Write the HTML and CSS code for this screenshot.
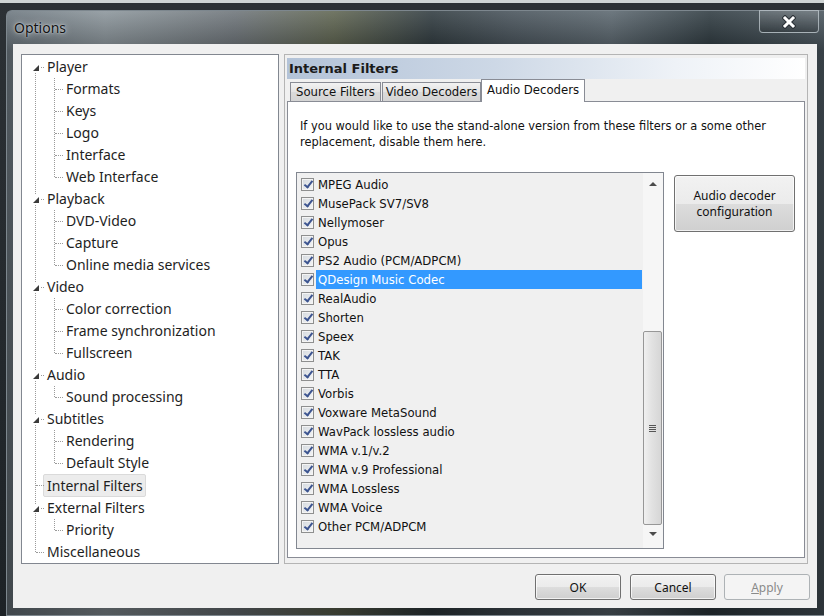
FILE: index.html
```html
<!DOCTYPE html>
<html lang="en">
<head>
  <meta charset="UTF-8">
  <title>Options</title>
  <link rel="stylesheet" href="styles.css">
</head>
<body>
  <div class="window">
    <div class="titlebar">
      <span class="title">Options</span>
      <span class="close">
        <svg width="14" height="14" viewBox="0 0 14 14">
          <path d="M3 3 L11 11 M11 3 L3 11" stroke="#2a3036" stroke-width="5" stroke-linecap="square"/>
          <path d="M3 3 L11 11 M11 3 L3 11" stroke="#fff" stroke-width="3" stroke-linecap="square"/>
        </svg>
      </span>
    </div>

    <div class="client">
      <div class="main">
        <div class="tree-box">
          <ul class="tree">
            <li class="node"><span class="exp"></span><span class="label">Player</span>
              <ul class="sub">
                <li>Formats</li>
                <li>Keys</li>
                <li>Logo</li>
                <li>Interface</li>
                <li>Web Interface</li>
              </ul>
            </li>
            <li class="node"><span class="exp"></span><span class="label">Playback</span>
              <ul class="sub">
                <li>DVD-Video</li>
                <li>Capture</li>
                <li>Online media services</li>
              </ul>
            </li>
            <li class="node"><span class="exp"></span><span class="label">Video</span>
              <ul class="sub">
                <li>Color correction</li>
                <li>Frame synchronization</li>
                <li>Fullscreen</li>
              </ul>
            </li>
            <li class="node"><span class="exp"></span><span class="label">Audio</span>
              <ul class="sub">
                <li>Sound processing</li>
              </ul>
            </li>
            <li class="node"><span class="exp"></span><span class="label">Subtitles</span>
              <ul class="sub">
                <li>Rendering</li>
                <li>Default Style</li>
              </ul>
            </li>
            <li class="node"><span class="label selected">Internal Filters</span></li>
            <li class="node"><span class="exp"></span><span class="label">External Filters</span>
              <ul class="sub">
                <li>Priority</li>
              </ul>
            </li>
            <li class="node"><span class="label">Miscellaneous</span></li>
          </ul>
        </div>

        <div class="panel">
          <div class="panel-head">Internal Filters</div>
          <div class="tabs">
            <span class="tab tab-source">Source Filters</span>
            <span class="tab tab-video">Video Decoders</span>
            <span class="tab tab-audio active">Audio Decoders</span>
          </div>
          <div class="page">
            <p class="desc">If you would like to use the stand-alone version from these filters or a some other<br>replacement, disable them here.</p>
            <div class="page-row">
              <div class="listbox">
                <ul class="items">
                  <li><span class="cb"></span><span class="txt">MPEG Audio</span></li>
                  <li><span class="cb"></span><span class="txt">MusePack SV7/SV8</span></li>
                  <li><span class="cb"></span><span class="txt">Nellymoser</span></li>
                  <li><span class="cb"></span><span class="txt">Opus</span></li>
                  <li><span class="cb"></span><span class="txt">PS2 Audio (PCM/ADPCM)</span></li>
                  <li class="sel"><span class="cb"></span><span class="txt">QDesign Music Codec</span></li>
                  <li><span class="cb"></span><span class="txt">RealAudio</span></li>
                  <li><span class="cb"></span><span class="txt">Shorten</span></li>
                  <li><span class="cb"></span><span class="txt">Speex</span></li>
                  <li><span class="cb"></span><span class="txt">TAK</span></li>
                  <li><span class="cb"></span><span class="txt">TTA</span></li>
                  <li><span class="cb"></span><span class="txt">Vorbis</span></li>
                  <li><span class="cb"></span><span class="txt">Voxware MetaSound</span></li>
                  <li><span class="cb"></span><span class="txt">WavPack lossless audio</span></li>
                  <li><span class="cb"></span><span class="txt">WMA v.1/v.2</span></li>
                  <li><span class="cb"></span><span class="txt">WMA v.9 Professional</span></li>
                  <li><span class="cb"></span><span class="txt">WMA Lossless</span></li>
                  <li><span class="cb"></span><span class="txt">WMA Voice</span></li>
                  <li><span class="cb"></span><span class="txt">Other PCM/ADPCM</span></li>
                </ul>
                <div class="scrollbar">
                  <span class="sb-btn"><span class="arrow-up"></span></span>
                  <div class="sb-track">
                    <div class="thumb"><span class="grip"></span></div>
                  </div>
                  <span class="sb-btn sb-down"><span class="arrow-down"></span></span>
                </div>
              </div>
              <button class="btn btn-config">Audio decoder<br>configuration</button>
            </div>
          </div>
        </div>
      </div>

      <div class="footer">
        <button class="btn btn-ok">OK</button>
        <button class="btn btn-cancel">Cancel</button>
        <button class="btn btn-apply" disabled><u>A</u>pply</button>
      </div>
    </div>
  </div>
</body>
</html>
```

FILE: styles.css
```css
html, body {
  margin: 0;
  padding: 0;
}
body {
  width: 824px;
  height: 616px;
  overflow: hidden;
  background: linear-gradient(#cfd4d4 0, #cfd4d4 3px, #2c3135 3px, #1d2226 100%);
  padding-top: 10px;
  box-sizing: border-box;
}
ul {
  margin: 0;
  padding: 0;
  list-style: none;
}

/* window frame */
.window {
  margin-left: 6px;
  width: 818px;
  height: 606px;
  box-sizing: border-box;
  border: 1px solid #7d878e;
  border-right: 0;
  border-radius: 6px 0 0 0;
  background:
    linear-gradient(to bottom, rgba(255,255,255,0.12), rgba(0,0,0,0.25) 40px, rgba(0,0,0,0.4)),
    linear-gradient(to right, #6b767e 0%, #8b959b 12%, #6d7479 28%, #5e6450 40%, #2f3a3f 52%, #47525a 62%, #5a666e 74%, #2e3a40 86%, #4a565e 100%);
}
.titlebar {
  height: 33px;
  display: flex;
  justify-content: space-between;
  align-items: flex-start;
  padding-left: 7px;
}
.title {
  margin-top: 7px;
  font-family: "Noto Sans", sans-serif;
  font-size: 14px;
  color: #111;
  text-shadow: 0 0 6px rgba(230, 235, 240, 0.9), 0 0 2px rgba(230, 235, 240, 0.9);
}
.close {
  width: 60px;
  height: 23px;
  margin-top: -1px;
  margin-right: 5px;
  box-sizing: border-box;
  border: 1px solid rgba(200, 210, 215, 0.7);
  border-radius: 0 0 4px 4px;
  background: linear-gradient(rgba(255,255,255,0.15), rgba(0,0,0,0.15));
  display: flex;
  align-items: center;
  justify-content: center;
}

.client {
  margin-left: 6px;
  width: 804px;
  height: 564px;
  background: #f0f0f0;
  padding: 10px 0 0 8px;
  box-sizing: border-box;
}
.main {
  display: flex;
  gap: 5px;
  height: 510px;
}

/* tree */
.tree-box {
  width: 258px;
  height: 510px;
  box-sizing: border-box;
  border: 1px solid #828790;
  background: #fff;
  font-family: "Noto Sans", sans-serif;
  font-size: 14px;
  color: #1e1e1e;
}
.tree {
  position: relative;
  padding-top: 1px;
}
.tree::before {
  content: '';
  position: absolute;
  left: 13px;
  top: 12px;
  bottom: 11px;
  border-left: 1px dotted #9a9a9a;
}
.tree li {
  position: relative;
  line-height: 22px;
}
.node {
  padding-left: 25px;
}
.node::before {
  content: '';
  position: absolute;
  left: 14px;
  top: 11px;
  width: 8px;
  border-top: 1px dotted #9a9a9a;
}
.exp {
  position: absolute;
  left: 9px;
  top: 7px;
  width: 9px;
  height: 9px;
  background: #fff;
  z-index: 1;
}
.exp::after {
  content: '';
  position: absolute;
  right: 1px;
  bottom: 1px;
  border-left: 6px solid transparent;
  border-bottom: 6px solid #3a3a3a;
}
.label {
  display: inline-block;
  height: 22px;
}
.label.selected {
  height: 21px;
  line-height: 21px;
  margin-left: -4px;
  padding: 0 2px 0 3px;
  background: #ececec;
  border: 1px solid #dadada;
  border-radius: 2px;
}
.sub {
  position: relative;
  margin-left: -25px;
}
.sub::before {
  content: '';
  position: absolute;
  left: 32px;
  top: 0;
  bottom: 11px;
  border-left: 1px dotted #9a9a9a;
}
.sub li {
  height: 22px;
  padding-left: 44px;
}
.sub li::before {
  content: '';
  position: absolute;
  left: 33px;
  top: 11px;
  width: 8px;
  border-top: 1px dotted #9a9a9a;
}

/* right panel */
.panel {
  width: 524px;
  height: 510px;
  box-sizing: border-box;
  border: 1px solid #b4b4b4;
  padding: 3px 2px 5px 2px;
  font-family: "DejaVu Sans", sans-serif;
  font-size: 11.7px;
  color: #111;
}
.panel-head {
  height: 21px;
  line-height: 22px;
  padding-left: 2px;
  font-family: "DejaVu Sans", sans-serif;
  font-weight: bold;
  font-size: 13px;
  color: #1a1a1a;
  background: linear-gradient(to right, #b3c3d8 0%, #cdd8e6 40%, #eef2f7 75%, #ffffff 100%);
}
.tabs {
  height: 22px;
  display: flex;
  align-items: flex-end;
  padding-left: 3px;
}
.tab {
  height: 19px;
  box-sizing: border-box;
  border: 1px solid #898c95;
  border-bottom: 0;
  background: linear-gradient(#f2f2f2, #e3e3e3 50%, #dadada 51%, #d4d4d4);
  text-align: center;
  line-height: 19px;
  white-space: nowrap;
}
.tab-source {
  width: 91px;
}
.tab-video {
  width: 99px;
  margin-left: 1px;
}
.tab-audio {
  width: 104px;
}
.tab.active {
  height: 23px;
  margin-bottom: -1px;
  background: #fff;
  line-height: 20px;
  position: relative;
  z-index: 1;
}
.page {
  height: 457px;
  box-sizing: border-box;
  border: 1px solid #898c95;
  background: #fff;
  padding: 16px 0 0 8px;
}
.desc {
  margin: 0 0 22px 4px;
  line-height: 16px;
  font-size: 11.4px;
  white-space: nowrap;
}
.page-row {
  display: flex;
  align-items: flex-start;
}

/* list with checkboxes */
.listbox {
  width: 368px;
  height: 377px;
  box-sizing: border-box;
  border: 1px solid #828790;
  background: #f0f0f0;
  display: flex;
}
.items {
  flex: 1;
  padding-top: 2px;
}
.items li {
  height: 19px;
  display: flex;
  align-items: center;
  padding-left: 4px;
  padding-right: 1px;
}
.cb {
  position: relative;
  width: 13px;
  height: 13px;
  box-sizing: border-box;
  border: 1px solid #8e8f8f;
  background: linear-gradient(135deg, #d4d9de, #f4f5f6);
  box-shadow: inset 0 0 0 1px #f4f4f4;
}
.cb::after {
  content: '';
  position: absolute;
  left: 4px;
  top: 0;
  width: 3px;
  height: 7px;
  border-right: 2px solid #3c5490;
  border-bottom: 2px solid #3c5490;
  transform: rotate(38deg);
}
.txt {
  flex: 1;
  margin-left: 2px;
  padding-left: 2px;
  padding-top: 1px;
  line-height: 18px;
}
.sel .txt {
  background: #3399ff;
  color: #fff;
}
.scrollbar {
  width: 20px;
  display: flex;
  flex-direction: column;
  background: #f6f6f6;
}
.sb-btn {
  height: 17px;
  display: flex;
  align-items: center;
  justify-content: center;
}
.sb-down {
  height: 22px;
}
.arrow-up {
  border-left: 4px solid transparent;
  border-right: 4px solid transparent;
  border-bottom: 4px solid #4c4c4c;
  margin-top: 5px;
}
.arrow-down {
  border-left: 4px solid transparent;
  border-right: 4px solid transparent;
  border-top: 4px solid #4c4c4c;
  margin-top: -6px;
}
.sb-track {
  flex: 1;
  padding-top: 141px;
}
.thumb {
  height: 194px;
  width: 19px;
  box-sizing: border-box;
  border: 1px solid #979797;
  border-radius: 2px;
  background: linear-gradient(to right, #f0f0f0, #e2e2e2 45%, #d6d6d6);
  display: flex;
  align-items: center;
  justify-content: center;
}
.grip {
  width: 7px;
  height: 7px;
  background: repeating-linear-gradient(#555 0, #555 1px, transparent 1px, transparent 2px);
}

/* buttons */
.btn {
  font-family: "Noto Sans", sans-serif;
  font-size: 12px;
  color: #111;
  border: 1px solid #707070;
  border-radius: 3px;
  background: linear-gradient(#f2f2f2, #ebebeb 50%, #dddddd 51%, #cfcfcf);
  box-shadow: inset 0 0 0 1px rgba(255,255,255,0.7);
  padding: 0;
}
.btn-config {
  width: 121px;
  height: 57px;
  margin: 3px 0 0 10px;
  line-height: 16px;
}
.footer {
  display: flex;
  justify-content: flex-end;
  gap: 9px;
  margin-top: 10px;
  padding-right: 7px;
}
.footer .btn {
  width: 86px;
  height: 26px;
}
.btn-apply {
  margin-left: -1px;
  color: #8a8a8a;
  border-color: #adb2b5;
  background: #f4f4f4;
  box-shadow: none;
}
```
